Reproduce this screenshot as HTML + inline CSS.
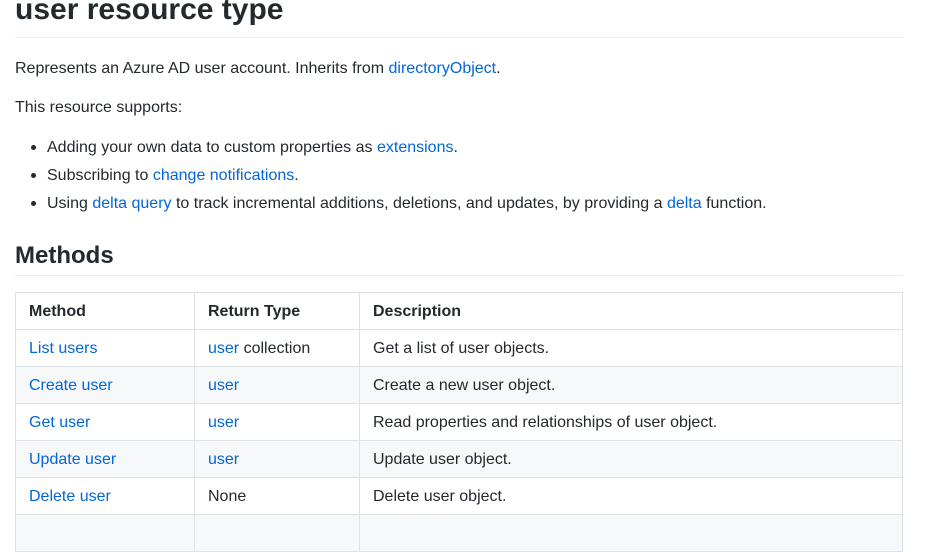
<!DOCTYPE html>
<html><head><style>
body{margin:0;background:#fff;font-family:"Liberation Sans",sans-serif;color:#24292e;font-size:16px;overflow:hidden;height:519px}
a{color:#0366d6;text-decoration:none}
.abs{position:absolute;white-space:nowrap}
h1{position:absolute;left:15px;top:-10px;margin:0;font-size:30px;font-weight:bold;line-height:40px}
.hr{position:absolute;left:15px;width:888px;height:1px;background:#eaecef}
table{position:absolute;left:15px;top:292px;border-collapse:collapse;width:888px}
td,th{border:1px solid #dfe2e5;height:36px;padding:2px 13px 0;box-sizing:border-box;text-align:left;font-size:16px;white-space:nowrap}
tr{height:37px}
th{font-weight:bold}
tr:nth-child(odd) td{background:#f6f8fa}
tr.h th{background:#fff}
.dot{position:absolute;width:5px;height:5px;border-radius:50%;background:#24292e}
</style></head><body>
<h1>user resource type</h1>
<div class="hr" style="top:37px"></div>
<div class="abs" style="left:15px;top:60px">Represents an Azure AD user account. Inherits from <a>directoryObject</a>.</div>
<div class="abs" style="left:15px;top:99px">This resource supports:</div>
<div class="dot" style="left:31px;top:145px"></div>
<div class="abs" style="left:47px;top:139px">Adding your own data to custom properties as <a>extensions</a>.</div>
<div class="dot" style="left:31px;top:173px"></div>
<div class="abs" style="left:47px;top:167px">Subscribing to <a>change notifications</a>.</div>
<div class="dot" style="left:31px;top:201px"></div>
<div class="abs" style="left:47px;top:195px">Using <a>delta query</a> to track incremental additions, deletions, and updates, by providing a <a>delta</a> function.</div>
<div class="abs" style="left:15px;top:242px;font-size:24px;font-weight:bold">Methods</div>
<div class="hr" style="top:275px"></div>
<table>
<tr class="h"><th style="width:179px">Method</th><th style="width:165px">Return Type</th><th>Description</th></tr>
<tr><td><a>List users</a></td><td><a>user</a> collection</td><td>Get a list of user objects.</td></tr>
<tr><td><a>Create user</a></td><td><a>user</a></td><td>Create a new user object.</td></tr>
<tr><td><a>Get user</a></td><td><a>user</a></td><td>Read properties and relationships of user object.</td></tr>
<tr><td><a>Update user</a></td><td><a>user</a></td><td>Update user object.</td></tr>
<tr><td><a>Delete user</a></td><td>None</td><td>Delete user object.</td></tr>
<tr><td>&nbsp;</td><td></td><td></td></tr>
</table>
</body></html>
